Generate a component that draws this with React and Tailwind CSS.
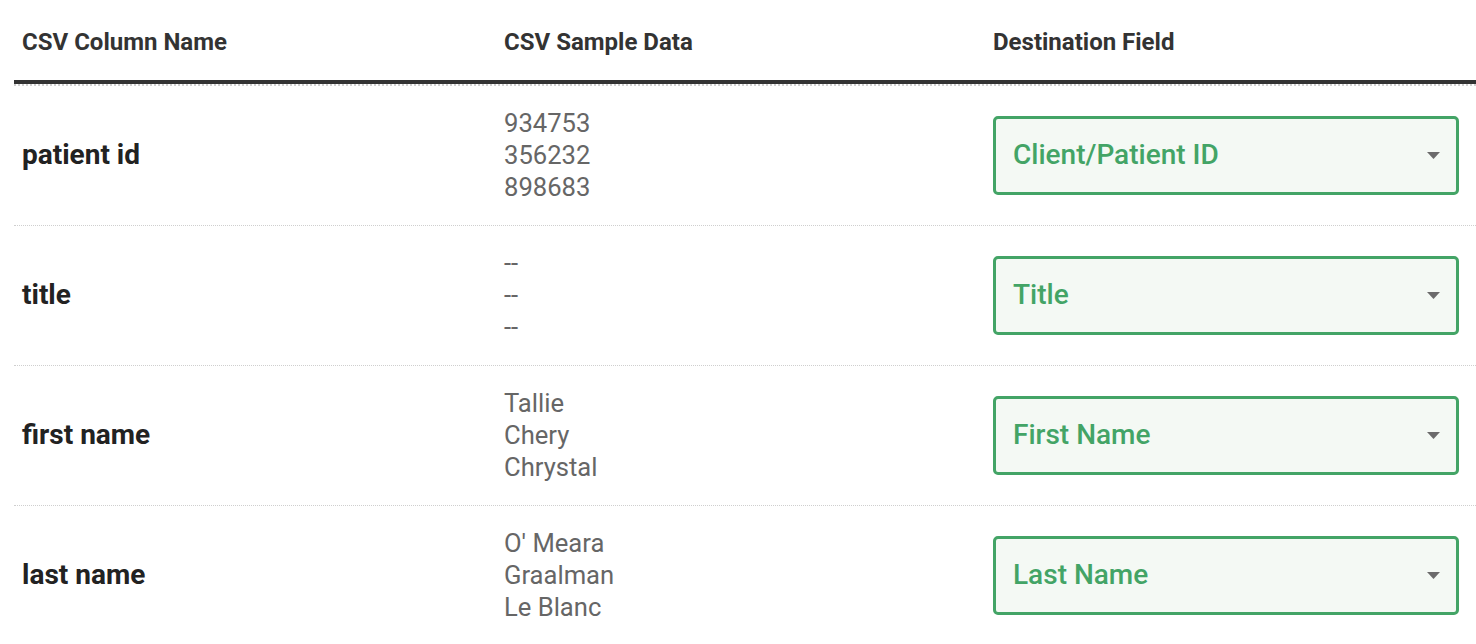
import { useState } from 'react'

// ── Mapping rows ─────────────────────────────────────────────────────────────
const ROWS = [
  { column: 'patient id', samples: ['934753', '356232', '898683'], field: 'Client/Patient ID' },
  { column: 'title', samples: ['--', '--', '--'], field: 'Title' },
  { column: 'first name', samples: ['Tallie', 'Chery', 'Chrystal'], field: 'First Name' },
  { column: 'last name', samples: ['O\' Meara', 'Graalman', 'Le Blanc'], field: 'Last Name' },
]

const GRID = 'grid grid-cols-[482px_489px_1fr] items-center'

function FieldSelect({ value }) {
  return (
    <div className="flex h-[79px] w-[466px] items-center justify-between rounded-[5px] border-[3px] border-[#43a466] bg-[#f4f9f4] pl-[17px] pr-[16px]">
      <span className="text-[28px] font-medium text-[#43a466]">{value}</span>
      <svg width="13" height="7" viewBox="0 0 13 7">
        <path d="M0 0h13L6.5 7z" fill="#6b6b6b" />
      </svg>
    </div>
  )
}

export default function App() {
  const [rows] = useState(ROWS)

  return (
    <div className="min-h-[644px] bg-white pl-[14px] font-['Roboto','Liberation_Sans',sans-serif]">
      {/* Header */}
      <div className={`${GRID} h-[84px] border-b-4 border-[#333] pt-[3px]`}>
        <div className="pl-2 text-[24px] font-bold text-[#333]">CSV Column Name</div>
        <div className="pl-2 text-[24px] font-bold text-[#333]">CSV Sample Data</div>
        <div className="pl-2 text-[24px] font-bold text-[#333]">Destination Field</div>
      </div>
      <div className="border-t-2 border-dotted border-[#d0d0d0]" />

      {/* Body */}
      {rows.map((row) => (
        <div key={row.column} className={`${GRID} h-[140px] border-b border-dotted border-[#cfcfcf] pb-[1px]`}>
          <div className="pl-2 text-[28px] font-bold text-[#222]">{row.column}</div>
          <div className="pl-2 text-[25.6px] leading-[32px] text-[#666]">
            {row.samples.map((s, i) => (
              <div key={i}>{s}</div>
            ))}
          </div>
          <div className="pl-2">
            <FieldSelect value={row.field} />
          </div>
        </div>
      ))}
    </div>
  )
}
